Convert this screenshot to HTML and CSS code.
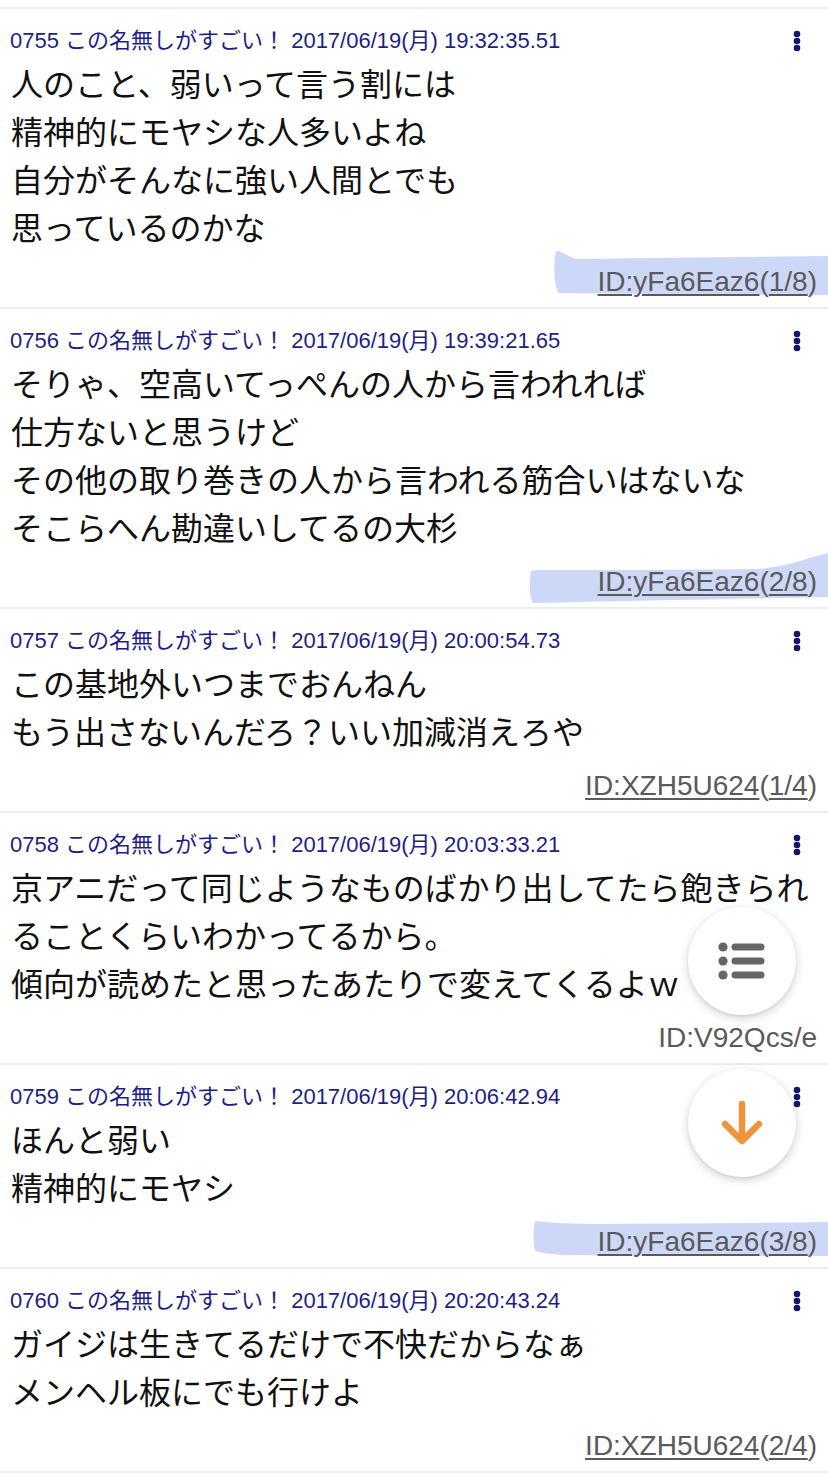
FILE: index.html
```html
<!DOCTYPE html>
<html lang="ja">
<head>
<meta charset="utf-8">
<title>スレッド</title>
<link rel="stylesheet" href="styles.css">
</head>
<body>
<div class="thread">

  <article class="post">
    <div class="post-head">
      <span class="meta">0755 この名無しがすごい！ 2017/06/19(月) 19:32:35.51</span>
      <span class="kebab"><svg width="8" height="22" viewBox="0 0 8 22"><circle cx="4" cy="4" r="3.3"/><circle cx="4" cy="11" r="3.3"/><circle cx="4" cy="18" r="3.3"/></svg></span>
    </div>
    <div class="post-body">人のこと、弱いって言う割には<br>精神的にモヤシな人多いよね<br>自分がそんなに強い人間とでも<br>思っているのかな</div>
    <div class="post-foot">
      <svg class="mark mark1" width="275" height="46" viewBox="0 0 275 46"><path d="M3,1 C8,0 13,6 24,9 C90,8 180,7 275,6 L275,45 C180,45 90,44 5,43 C1,32 0,16 3,1 Z"/></svg>
      <span class="id-line"><a class="id-link">ID:yFa6Eaz6</a>(<a class="id-link">1/8</a>)</span>
    </div>
  </article>

  <article class="post">
    <div class="post-head">
      <span class="meta">0756 この名無しがすごい！ 2017/06/19(月) 19:39:21.65</span>
      <span class="kebab"><svg width="8" height="22" viewBox="0 0 8 22"><circle cx="4" cy="4" r="3.3"/><circle cx="4" cy="11" r="3.3"/><circle cx="4" cy="18" r="3.3"/></svg></span>
    </div>
    <div class="post-body">そりゃ、空高いてっぺんの人から言われれば<br>仕方ないと思うけど<br>その他の取り巻きの人から言われる筋合いはないな<br>そこらへん勘違いしてるの大杉</div>
    <div class="post-foot">
      <svg class="mark mark2" width="300" height="52" viewBox="0 0 300 52"><path d="M3,18 C1,30 1,42 5,50 C100,48 200,46 300,44 L300,0 C282,4 262,13 232,16 C160,17 80,17 10,17 Z"/></svg>
      <span class="id-line"><a class="id-link">ID:yFa6Eaz6</a>(<a class="id-link">2/8</a>)</span>
    </div>
  </article>

  <article class="post">
    <div class="post-head">
      <span class="meta">0757 この名無しがすごい！ 2017/06/19(月) 20:00:54.73</span>
      <span class="kebab"><svg width="8" height="22" viewBox="0 0 8 22"><circle cx="4" cy="4" r="3.3"/><circle cx="4" cy="11" r="3.3"/><circle cx="4" cy="18" r="3.3"/></svg></span>
    </div>
    <div class="post-body">この基地外いつまでおんねん<br>もう出さないんだろ？いい加減消えろや</div>
    <div class="post-foot">
      <span class="id-line"><a class="id-link">ID:XZH5U624</a>(<a class="id-link">1/4</a>)</span>
    </div>
  </article>

  <article class="post">
    <div class="post-head">
      <span class="meta">0758 この名無しがすごい！ 2017/06/19(月) 20:03:33.21</span>
      <span class="kebab"><svg width="8" height="22" viewBox="0 0 8 22"><circle cx="4" cy="4" r="3.3"/><circle cx="4" cy="11" r="3.3"/><circle cx="4" cy="18" r="3.3"/></svg></span>
    </div>
    <div class="post-body">京アニだって同じようなものばかり出してたら飽きられることくらいわかってるから。<br>傾向が読めたと思ったあたりで変えてくるよｗ</div>
    <div class="post-foot">
      <span class="id-line">ID:V92Qcs/e</span>
    </div>
  </article>

  <article class="post">
    <div class="post-head">
      <span class="meta">0759 この名無しがすごい！ 2017/06/19(月) 20:06:42.94</span>
      <span class="kebab"><svg width="8" height="22" viewBox="0 0 8 22"><circle cx="4" cy="4" r="3.3"/><circle cx="4" cy="11" r="3.3"/><circle cx="4" cy="18" r="3.3"/></svg></span>
    </div>
    <div class="post-body">ほんと弱い<br>精神的にモヤシ</div>
    <div class="post-foot">
      <svg class="mark mark3" width="295" height="42" viewBox="0 0 295 42"><path d="M2,5 C20,7 40,8 62,8 C140,8 220,7 295,6 L295,40 C200,40 110,40 40,39 C22,39 9,37 2,35 C0,25 0,14 2,5 Z"/></svg>
      <span class="id-line"><a class="id-link">ID:yFa6Eaz6</a>(<a class="id-link">3/8</a>)</span>
    </div>
  </article>

  <article class="post">
    <div class="post-head">
      <span class="meta">0760 この名無しがすごい！ 2017/06/19(月) 20:20:43.24</span>
      <span class="kebab"><svg width="8" height="22" viewBox="0 0 8 22"><circle cx="4" cy="4" r="3.3"/><circle cx="4" cy="11" r="3.3"/><circle cx="4" cy="18" r="3.3"/></svg></span>
    </div>
    <div class="post-body">ガイジは生きてるだけで不快だからなぁ<br>メンヘル板にでも行けよ</div>
    <div class="post-foot">
      <span class="id-line"><a class="id-link">ID:XZH5U624</a>(<a class="id-link">2/4</a>)</span>
    </div>
  </article>

</div>

<div class="fabs">
  <div class="fab">
    <svg width="50" height="40" viewBox="0 0 50 40"><g fill="#666"><circle cx="6" cy="6" r="4.6"/><circle cx="6" cy="20" r="4.6"/><circle cx="6" cy="34" r="4.6"/></g><g stroke="#666" stroke-width="7" stroke-linecap="round"><line x1="18" y1="6" x2="44" y2="6"/><line x1="18" y1="20" x2="44" y2="20"/><line x1="18" y1="34" x2="44" y2="34"/></g></svg>
  </div>
  <div class="fab">
    <svg width="50" height="50" viewBox="0 0 50 50"><g fill="none" stroke="#f0943a" stroke-width="6.5" stroke-linecap="round" stroke-linejoin="round"><line x1="25" y1="6" x2="25" y2="42"/><polyline points="8,26 25,43 42,26"/></g></svg>
  </div>
</div>
</body>
</html>
```
FILE: styles.css
```css
* { box-sizing: border-box; }
html, body { margin: 0; padding: 0; background: #fff; }
body {
  width: 828px;
  font-family: "Liberation Sans", "Noto Sans CJK JP", sans-serif;
  color: #111;
}
.thread { padding-top: 7px; }
.post {
  border-top: 2px solid #ececec;
  padding: 17px 11px 7px 10px;
}
.post:last-child { border-bottom: 2px solid #ececec; }
.post-head {
  display: flex;
  align-items: center;
  justify-content: space-between;
  height: 30px;
  margin-bottom: 2px;
}
.meta {
  font-size: 22px;
  line-height: 30px;
  color: #1e1e86;
  white-space: nowrap;
}
.kebab {
  display: flex;
  margin-right: 16px;
}
.kebab svg { fill: #16166e; }
.post-body {
  font-family: "Noto Sans CJK JP", "Liberation Sans", sans-serif;
  font-size: 32px;
  line-height: 48px;
  color: #111;
  padding-left: 1px;
}
.post-foot {
  position: relative;
  display: flex;
  justify-content: flex-end;
  align-items: center;
  height: 36px;
  margin-top: 14px;
  margin-right: -11px;
  padding-right: 11px;
}
.id-line {
  position: relative;
  font-size: 28px;
  line-height: 36px;
  color: #5a5a5a;
  white-space: nowrap;
}
.id-link {
  color: #5a5a5a;
  text-decoration: underline;
  text-decoration-thickness: 1.5px;
  text-underline-offset: 3px;
}
.mark {
  position: absolute;
  right: 0;
  fill: #cdd8f9;
}
.mark1 { top: -14px; }
.mark2 { top: -11px; }
.mark3 { top: -8px; }
.fabs {
  position: fixed;
  top: 907px;
  right: 32px;
  display: flex;
  flex-direction: column;
  gap: 54px;
}
.fab {
  width: 108px;
  height: 108px;
  border-radius: 50%;
  background: #fff;
  box-shadow: 0 3px 10px rgba(0,0,0,0.18), 0 1px 3px rgba(0,0,0,0.08);
  display: flex;
  align-items: center;
  justify-content: center;
}
```
